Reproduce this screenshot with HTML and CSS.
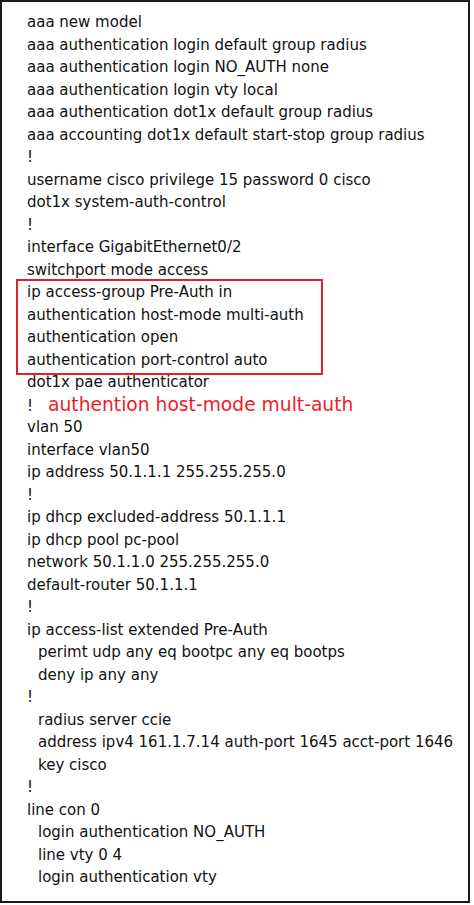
FILE: index.html
```html
<!DOCTYPE html>
<html lang="en">
<head>
  <meta charset="UTF-8">
  <title>Config</title>
  <link rel="stylesheet" href="styles.css">
</head>
<body>
  <div class="config">
    <div class="line">aaa new model</div>
    <div class="line">aaa authentication login default group radius</div>
    <div class="line">aaa authentication login NO_AUTH none</div>
    <div class="line">aaa authentication login vty local</div>
    <div class="line">aaa authentication dot1x default group radius</div>
    <div class="line">aaa accounting dot1x default start-stop group radius</div>
    <div class="line">!</div>
    <div class="line">username cisco privilege 15 password 0 cisco</div>
    <div class="line">dot1x system-auth-control</div>
    <div class="line">!</div>
    <div class="line">interface GigabitEthernet0/2</div>
    <div class="line">switchport mode access</div>
    <div class="marcado">
      <div class="line">ip access-group Pre-Auth in</div>
      <div class="line">authentication host-mode multi-auth</div>
      <div class="line">authentication open</div>
      <div class="line">authentication port-control auto</div>
    </div>
    <div class="line">dot1x pae authenticator</div>
    <div class="line">!<span class="nota">authention host-mode mult-auth</span></div>
    <div class="line">vlan 50</div>
    <div class="line">interface vlan50</div>
    <div class="line">ip address 50.1.1.1 255.255.255.0</div>
    <div class="line">!</div>
    <div class="line">ip dhcp excluded-address 50.1.1.1</div>
    <div class="line">ip dhcp pool pc-pool</div>
    <div class="line">network 50.1.1.0 255.255.255.0</div>
    <div class="line">default-router 50.1.1.1</div>
    <div class="line">!</div>
    <div class="line">ip access-list extended Pre-Auth</div>
    <div class="line sub">perimt udp any eq bootpc any eq bootps</div>
    <div class="line sub">deny ip any any</div>
    <div class="line">!</div>
    <div class="line sub">radius server ccie</div>
    <div class="line sub">address ipv4 161.1.7.14 auth-port 1645 acct-port 1646</div>
    <div class="line sub">key cisco</div>
    <div class="line">!</div>
    <div class="line">line con 0</div>
    <div class="line sub">login authentication NO_AUTH</div>
    <div class="line sub">line vty 0 4</div>
    <div class="line sub">login authentication vty</div>
  </div>
</body>
</html>
```

FILE: styles.css
```css
body {
  margin: 0;
  background-color: #ffffff;
}

.config {
  border: 2px solid #1c1c1c;
  padding: 9px 0 0 25px;
  width: 441px;
  height: 890px;
  font-family: "DejaVu Sans", Verdana, sans-serif;
  font-size: 15px;
  color: #111111;
}

.line {
  height: 22.5px;
  line-height: 22.5px;
  white-space: pre;
}

.sub {
  padding-left: 11px;
}

.marcado {
  border: 2px solid #e3202b;
  margin: -2px 0 -4px -11px;
  padding: 0 0 2px 9px;
  width: 294px;
}

.nota {
  color: #ee1c25;
  font-size: 18.7px;
  margin-left: 15px;
}
```
